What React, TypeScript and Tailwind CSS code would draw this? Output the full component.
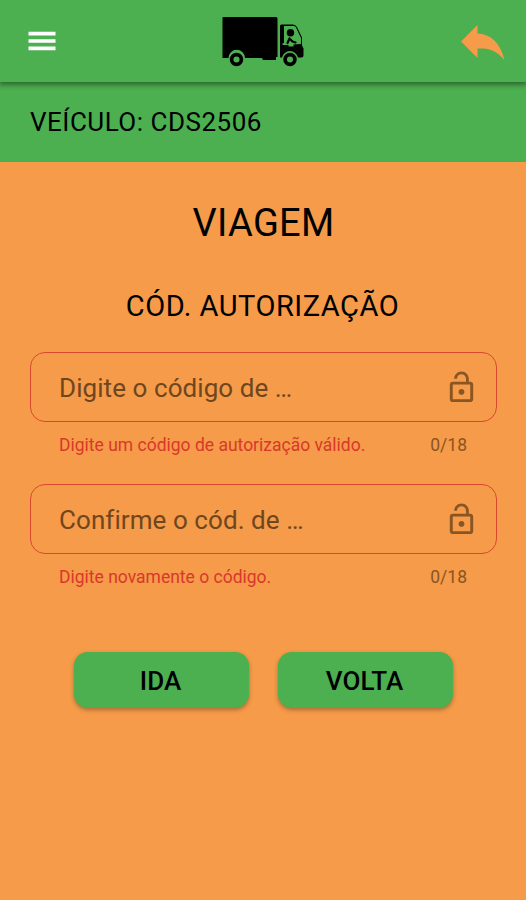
const Truck = () => {
    return (
        <svg className="mt-[3px] h-[54px] w-[84px]" viewBox="0 0 84 54" fill="none">
            <path fill="#000" d="M2.500 1H55q1.500 0 1.500 1.500V41H55v3H42l-1-2H24a8.200 8.200 0 0 0-16.500 0h-6V2q0-1 1-1z" />
            <path fill="#000" fillRule="evenodd" d="M60.500 8.500H72q2.500 0 4 2.500l5 10.500v8l1.500 3v7q0 2-2 2H77a8.200 8.200 0 0 0-16 0h-2V10q0-1.500 1.500-1.500zM63 10v17l-1.500.500v1.500h6v1.500h5v-2l7.500-.500V22L75 11.500q-.500-1.500-2-1.500z" />
            <circle cx="69.500" cy="16.800" r="3.700" fill="#000" />
            <path stroke="#000" strokeWidth="2.200" strokeLinecap="round" strokeLinejoin="round" d="M68.500 22.500l-2 4.500M68.500 22.500l3 3 3 1" />
            <circle cx="15.500" cy="43.500" r="4.900" stroke="#000" strokeWidth="3.700" />
            <circle cx="69" cy="43.500" r="4.900" stroke="#000" strokeWidth="3.700" />
        </svg>
    )
}

const LockOpen = () => {
    return (
        <svg className="size-[35px] shrink-0" viewBox="0 0 24 24" fill="#895522">
            <path d="M12 17c1.100 0 2-.900 2-2s-.900-2-2-2-2 .900-2 2 .900 2 2 2zm6-9h-1V6c0-2.760-2.240-5-5-5S7 3.240 7 6h1.900c0-1.710 1.390-3.100 3.100-3.100 1.710 0 3.100 1.390 3.100 3.100v2H6c-1.100 0-2 .900-2 2v10c0 1.100.900 2 2 2h12c1.100 0 2-.900 2-2V10c0-1.100-.900-2-2-2zm0 12H6V10h12v10z" />
        </svg>
    )
}

type FieldProps = {
    label: string
    helper: string
}

const Field = ({ label, helper }: FieldProps) => {
    return (
        <div className="h-[132px]">
            <div className="flex h-[70px] items-center justify-between rounded-[15px] border-[1.500px] border-[#d9482f] pr-[17px] pl-7">
                <p className="pt-0.5 text-[26px] leading-none tracking-[0.07px] text-[#6f461e]">{label}</p>
                <LockOpen />
            </div>
            <div className="mt-[13px] flex justify-between pr-[30px] pl-[29px] text-[17.500px] leading-5">
                <p className="text-[#d9382c]">{helper}</p>
                <p className="text-[#895522]">0/18</p>
            </div>
        </div>
    )
}

const DirectionButton = ({ children }: { children: string }) => {
    return (
        <button className="h-14 w-[175px] rounded-[14px] bg-[#4caf50] pt-px pr-0.5 text-[26px] leading-none font-medium shadow-[0_2px_4px_rgba(0,0,0,0.3)]">
            {children}
        </button>
    )
}

const App = () => {
    return (
        <div className="flex h-[900px] w-[526px] flex-col bg-[#f59b49] font-['Roboto',sans-serif] text-black">
            <header className="z-10 grid h-[82px] shrink-0 grid-cols-3 items-center bg-[#4caf50] shadow-[0_2px_5px_1px_rgba(0,0,0,0.4)]">
                <svg className="ml-[23.500px] size-[36px]" viewBox="0 0 24 24" fill="#fff">
                    <path d="M3 18.200h18v-2.500H3v2.500zm0-5h18v-2.400H3v2.400zm0-7.400v2.500h18V5.800H3z" />
                </svg>
                <div className="flex justify-center">
                    <Truck />
                </div>
                <svg className="mt-0.5 mr-[21px] h-[36px] w-[45px] justify-self-end" viewBox="0 0 45 36" fill="#f59b49">
                    <path d="M1 17.500L17.500 1v8.500C31 10 40 18.500 44.500 36 36 26 29 24 17.500 24.500V34z" />
                </svg>
            </header>
            <div className="flex h-20 shrink-0 items-center bg-[#4caf50] pl-[30px]">
                <p className="text-[26px] leading-none tracking-[0.5px]">VEÍCULO: CDS2506</p>
            </div>
            <main className="flex flex-col pr-[29px] pl-[30px]">
                <h1 className="mt-[39px] text-center text-[38px] leading-[44px] tracking-[0.3px]">VIAGEM</h1>
                <h2 className="mt-[44px] pr-0.5 text-center text-[29px] leading-[34px] tracking-[0.5px]">CÓD. AUTORIZAÇÃO</h2>
                <div className="mt-[29px]">
                    <Field label="Digite o código de …" helper="Digite um código de autorização válido." />
                    <Field label="Confirme o cód. de …" helper="Digite novamente o código." />
                </div>
                <div className="mt-9 flex justify-center gap-[29px]">
                    <DirectionButton>IDA</DirectionButton>
                    <DirectionButton>VOLTA</DirectionButton>
                </div>
            </main>
        </div>
    )
}

export default App
